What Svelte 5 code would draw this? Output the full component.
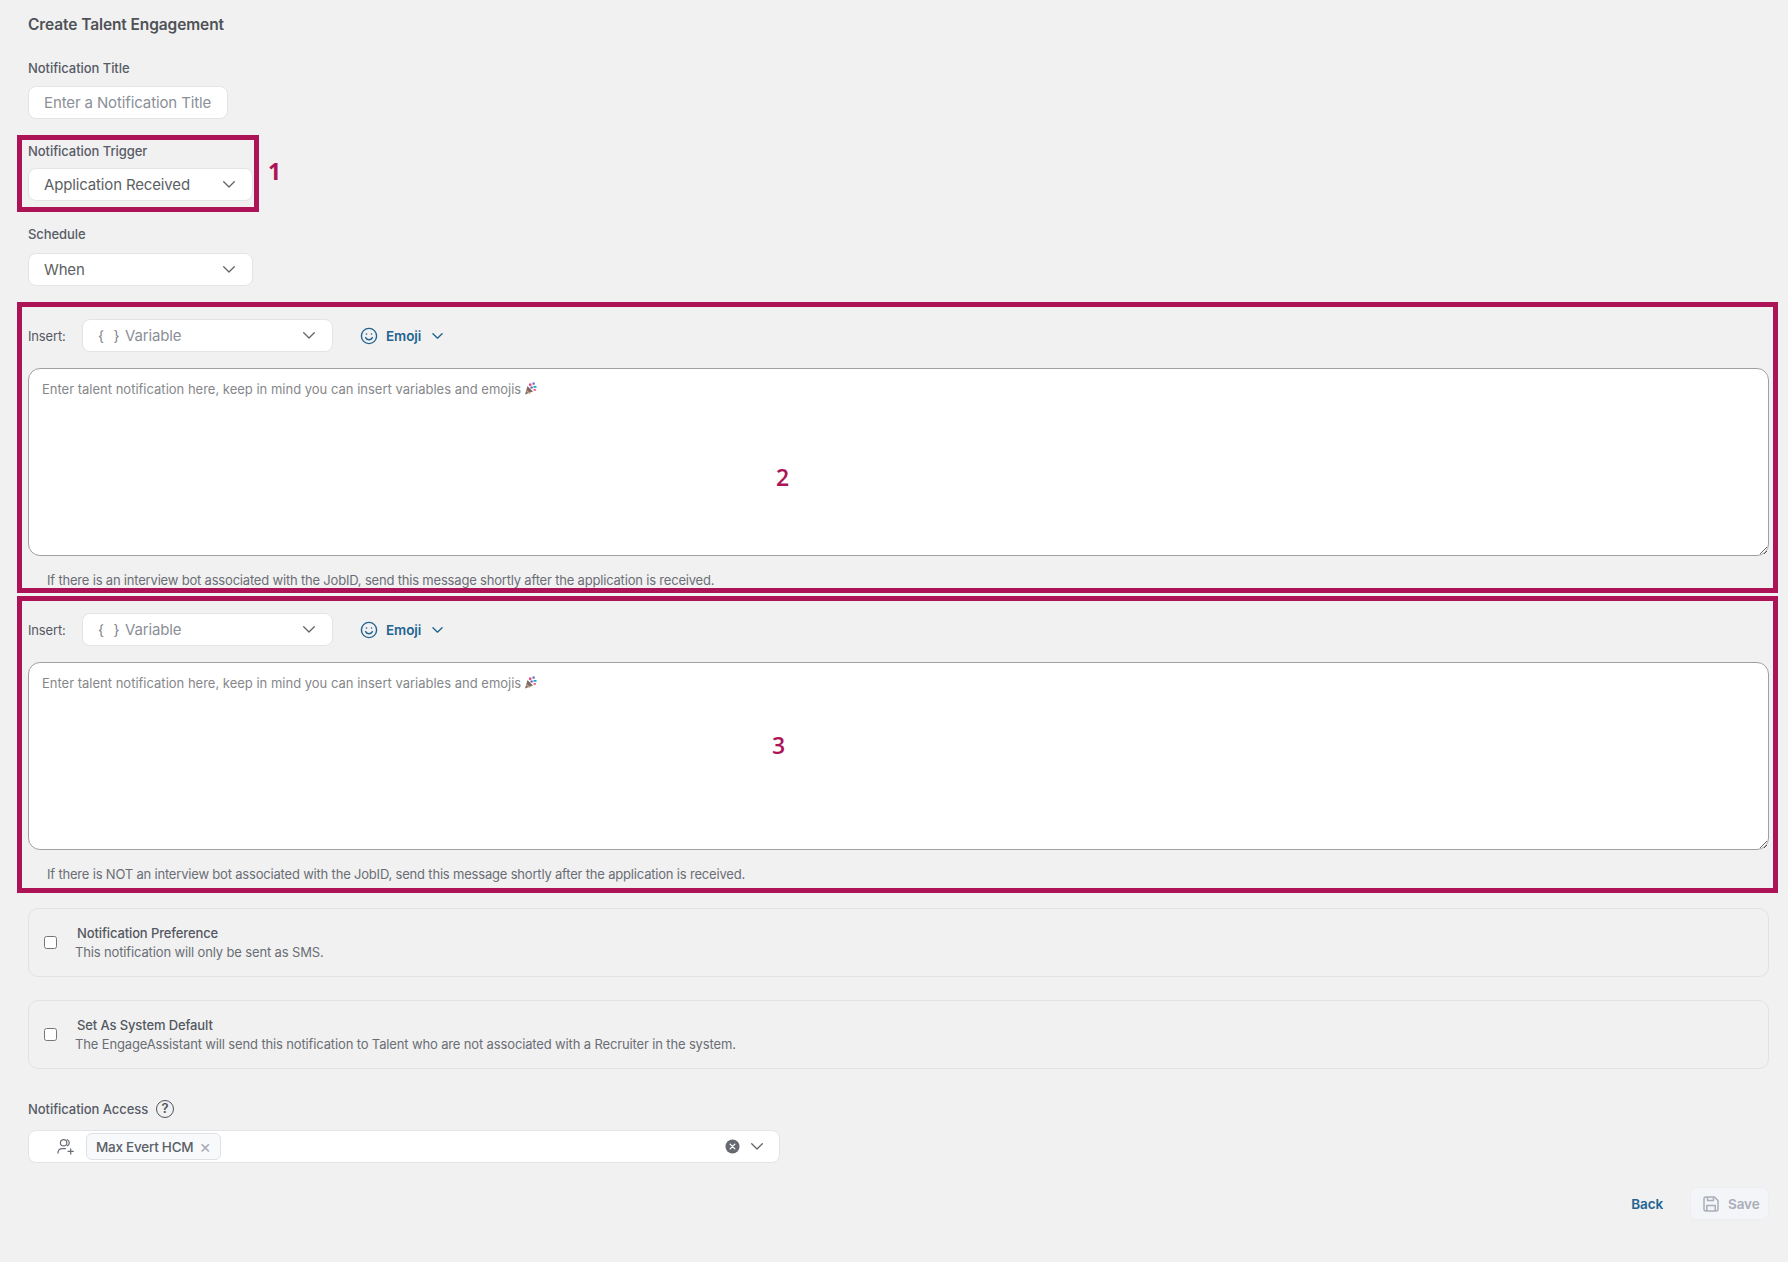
<script>
  let editors = [
    { help: 'If there is an interview bot associated with the JobID, send this message shortly after the application is received.' },
    { help: 'If there is NOT an interview bot associated with the JobID, send this message shortly after the application is received.' }
  ];

  let prefs = [
    { title: 'Notification Preference', text: 'This notification will only be sent as SMS.' },
    { title: 'Set As System Default', text: 'The EngageAssistant will send this notification to Talent who are not associated with a Recruiter in the system.' }
  ];
</script>

{#snippet chevron(cls = 'chev')}
  <svg class={cls} viewBox="0 0 12 7" fill="none" stroke="currentColor" stroke-width="1.3" stroke-linecap="round" stroke-linejoin="round"><path d="M.7.8 6 6l5.3-5.2" /></svg>
{/snippet}

<div class="page">
  <h1>Create Talent Engagement</h1>

  <div class="field title-field">
    <label for="title">Notification Title</label>
    <input id="title" class="title-input" placeholder="Enter a Notification Title" />
  </div>

  <div class="field">
    <div class="label">Notification Trigger</div>
    <button class="select wide">Application Received {@render chevron()}</button>
  </div>

  <div class="field schedule">
    <div class="label">Schedule</div>
    <button class="select wide">When {@render chevron()}</button>
  </div>

  {#each editors as editor}
    <section class="editor">
      <div class="insert-row">
        <span class="insert-label">Insert:</span>
        <button class="select variable">
          <span class="var-left"><span class="braces">&#123; &#125;</span>Variable</span>
          {@render chevron()}
        </button>
        <button class="emoji-btn">
          <svg class="smile" viewBox="0 0 18 18" fill="none" stroke="currentColor" stroke-width="1.4" stroke-linecap="round">
            <circle cx="9" cy="9" r="7.6" />
            <path d="M5.6 10.6c.8 1.5 2 2.2 3.4 2.2s2.6-.7 3.4-2.2" />
            <circle cx="6.5" cy="7" r=".8" fill="currentColor" stroke="none" />
            <circle cx="11.5" cy="7" r=".8" fill="currentColor" stroke="none" />
          </svg>
          Emoji
          {@render chevron('chev-small')}
        </button>
      </div>
      <div class="text-wrap">
        <textarea placeholder="Enter talent notification here, keep in mind you can insert variables and emojis"></textarea>
        <svg class="popper" viewBox="0 0 13 13">
          <path d="M1 12.5 3.5 4 9 9.500Z" fill="#7d6a62" />
          <path d="M2.200 8.500 6 11.500" stroke="#c9a888" stroke-width="1.2" />
          <rect x="5" y="1.500" width="2.4" height="2.4" fill="#e6457a" />
          <rect x="8.500" y=".5" width="2.2" height="2.2" fill="#5c6bc0" />
          <rect x="9.500" y="4" width="3" height="1.8" fill="#26a6c9" />
          <rect x="9.500" y="7" width="2.4" height="1.8" fill="#ec5f8c" />
          <rect x="6.500" y="4.500" width="2.2" height="2" fill="#6a4fb0" />
        </svg>
      </div>
      <p class="help">{editor.help}</p>
    </section>
  {/each}

  <div class="prefs">
    {#each prefs as pref}
      <div class="pref">
        <input type="checkbox" />
        <div class="pref-body">
          <div class="pref-title">{pref.title}</div>
          <div class="pref-text">{pref.text}</div>
        </div>
      </div>
    {/each}
  </div>

  <div class="access-label">
    Notification Access
    <span class="help-icon">?</span>
  </div>
  <div class="access">
    <svg class="people" viewBox="0 0 20 18" fill="none" stroke="currentColor" stroke-width="1.3" stroke-linecap="round">
      <circle cx="8" cy="5" r="3.4" />
      <path d="M12 1.800c1.400.6 2 1.800 2 3.200s-.6 2.500-2 3.200" />
      <path d="M2 16c0-3 1.800-4.800 4.500-4.800H10" />
      <path d="M15.500 11.500v5.500M12.800 14.200h5.400" />
    </svg>
    <span class="chip">Max Evert HCM <span class="chip-x">&times;</span></span>
    <span class="access-right">
      <svg class="clear" viewBox="0 0 16 16">
        <circle cx="8" cy="8" r="7.5" fill="#666a70" />
        <path d="M5.500 5.500l5 5m0-5-5 5" stroke="#fff" stroke-width="1.4" stroke-linecap="round" />
      </svg>
      {@render chevron()}
    </span>
  </div>

  <div class="actions">
    <button class="back">Back</button>
    <button class="save" disabled>
      <svg viewBox="0 0 16 16" fill="none" stroke="currentColor" stroke-width="1.5" stroke-linejoin="round">
        <path d="M1 3a2 2 0 0 1 2-2h8.500L15 4.500V13a2 2 0 0 1-2 2H3a2 2 0 0 1-2-2Z" />
        <path d="M4.500 1v3.500h6V1M3.800 15V9.500h8.400V15" />
      </svg>
      Save
    </button>
  </div>

  <!-- review markers drawn over the form -->
  <div class="mark mark-1"></div>
  <div class="mark mark-2"></div>
  <div class="mark mark-3"></div>
  <span class="num num-1">1</span>
  <span class="num num-2">2</span>
  <span class="num num-3">3</span>
</div>

<style>
  :global(body) {
    margin: 0;
    background: #f1f1f2;
  }

  .page {
    position: relative;
    box-sizing: border-box;
    height: 1262px;
    padding: 16px 19px 0 28px;
    font-family: Inter, 'Liberation Sans', sans-serif;
    color: #55595f;
    overflow: hidden;
  }

  h1 {
    margin: 0 0 25px;
    font-size: 15.5px;
    line-height: 18px;
    font-weight: 600;
    letter-spacing: -0.1px;
    color: #4f5256;
  }

  .field {
    margin-bottom: 24px;
  }

  .title-field {
    margin-bottom: 23px;
  }

  .title-field label {
    margin-bottom: 9px;
  }

  .schedule .label {
    margin-bottom: 10px;
  }

  label,
  .label,
  .access-label {
    display: block;
    margin-bottom: 8px;
    font-size: 13px;
    line-height: 18px;
    font-weight: 500;
    letter-spacing: -0.06px;
    color: #575c66;
  }

  .title-input,
  .select,
  .access {
    box-sizing: border-box;
    height: 33px;
    background: #fff;
    border: 1px solid #e3e4e7;
    border-radius: 8px;
    font-family: inherit;
  }

  .title-input {
    display: block;
    width: 200px;
    padding: 0 15px;
    font-size: 15px;
    letter-spacing: -0.12px;
    outline: none;
  }

  .title-input::placeholder {
    color: #8b9097;
    opacity: 1;
  }

  .select {
    display: flex;
    align-items: center;
    justify-content: space-between;
    padding: 0 17px 0 15px;
    font-size: 15px;
    letter-spacing: -0.15px;
    color: #5c5f64;
  }

  .wide {
    width: 225px;
  }

  .chev {
    width: 12px;
    height: 7px;
    color: #606469;
  }

  .editor {
    padding-top: 9px;
  }

  .editor + .editor {
    padding-top: 24px;
  }

  .insert-row {
    display: flex;
    align-items: center;
    height: 33px;
  }

  .insert-label {
    width: 54px;
    font-size: 13px;
    letter-spacing: -0.15px;
    color: #55595f;
  }

  .variable {
    width: 251px;
    color: #8b9097;
  }

  .var-left {
    display: flex;
    align-items: center;
    font-size: 15px;
  }

  .braces {
    width: 27px;
    text-align: left;
    font-size: 14px;
    word-spacing: 6px;
    color: #7d828a;
  }

  .emoji-btn {
    display: flex;
    align-items: center;
    margin-left: 27px;
    padding: 0;
    border: 0;
    background: none;
    font-family: inherit;
    font-size: 13.5px;
    font-weight: 600;
    letter-spacing: -0.1px;
    color: #22648f;
  }

  .smile {
    width: 18px;
    height: 18px;
    margin-right: 8px;
  }

  .chev-small {
    width: 11px;
    height: 6px;
    margin-left: 11px;
    stroke-width: 1.6;
  }

  .text-wrap {
    position: relative;
    margin-top: 16px;
  }

  textarea {
    display: block;
    box-sizing: border-box;
    width: 100%;
    height: 188px;
    padding: 11px 13px;
    background: #fff;
    border: 1px solid #a0a0a0;
    border-radius: 12px;
    font-family: inherit;
    font-size: 13px;
    line-height: 18px;
    outline: none;
  }

  textarea::placeholder {
    color: #85878a;
    opacity: 1;
  }

  .popper {
    position: absolute;
    left: 496px;
    top: 14px;
    width: 13px;
    height: 13px;
  }

  .help {
    margin: 15px 0 0 19px;
    font-size: 13px;
    line-height: 18px;
    letter-spacing: -0.19px;
    color: #6a6e74;
  }

  .prefs {
    display: flex;
    flex-direction: column;
    gap: 23px;
    margin-top: 25px;
  }

  .pref {
    box-sizing: border-box;
    display: flex;
    align-items: center;
    height: 69px;
    padding-left: 15px;
    border: 1px solid #e1e2e5;
    border-radius: 10px;
  }

  .pref input {
    width: 13px;
    height: 13px;
    margin: 0;
  }

  .pref-body {
    margin-left: 18px;
  }

  .pref-title {
    margin-left: 2px;
    font-size: 13px;
    line-height: 19px;
    font-weight: 500;
    letter-spacing: -0.12px;
    color: #54585f;
  }

  .pref-text {
    font-size: 13px;
    line-height: 19px;
    letter-spacing: -0.14px;
    color: #6a6e74;
  }

  .access-label {
    display: flex;
    align-items: center;
    gap: 8px;
    margin: 31px 0 12px;
  }

  .help-icon {
    box-sizing: border-box;
    width: 18px;
    height: 18px;
    border: 1.7px solid #4f5359;
    border-radius: 50%;
    font-size: 13px;
    line-height: 15px;
    font-weight: 600;
    text-align: center;
    color: #4f5359;
  }

  .access {
    display: flex;
    align-items: center;
    width: 752px;
    padding-left: 27px;
  }

  .people {
    width: 19px;
    height: 17px;
    margin-right: 11px;
    color: #696d74;
  }

  .chip {
    box-sizing: border-box;
    height: 27px;
    padding: 0 9px;
    display: flex;
    align-items: center;
    gap: 6px;
    background: #f8f9fb;
    border: 1px solid #dfe1e6;
    border-radius: 6px;
    font-size: 13.5px;
    font-weight: 500;
    letter-spacing: -0.25px;
    color: #5b5f67;
  }

  .chip-x {
    font-size: 18px;
    font-weight: 400;
    color: #a9adb3;
  }

  .access-right {
    display: flex;
    align-items: center;
    gap: 11px;
    margin-left: auto;
    padding-right: 16px;
  }

  .clear {
    width: 15px;
    height: 15px;
  }

  .actions {
    display: flex;
    justify-content: flex-end;
    align-items: center;
    gap: 27px;
    margin-top: 24px;
  }

  .back,
  .save {
    font-family: inherit;
    font-size: 13.5px;
    font-weight: 600;
    letter-spacing: -0.1px;
  }

  .back {
    padding: 0;
    border: 0;
    background: none;
    color: #22648f;
  }

  .save {
    display: flex;
    align-items: center;
    gap: 9px;
    box-sizing: border-box;
    width: 79px;
    height: 33px;
    padding: 0 0 0 12px;
    background: #f4f5f8;
    border: 1px solid #eceef2;
    border-radius: 7px;
    color: #a9aeb9;
  }

  .save svg {
    width: 16px;
    height: 16px;
  }

  .mark {
    position: absolute;
    box-sizing: border-box;
    border: 5px solid #ad1457;
    pointer-events: none;
  }

  .mark-1 {
    left: 17px;
    top: 135px;
    width: 242px;
    height: 77px;
  }

  .mark-2 {
    left: 17px;
    top: 302px;
    width: 1761px;
    height: 291px;
  }

  .mark-3 {
    left: 17px;
    top: 596px;
    width: 1761px;
    height: 297px;
  }

  .num {
    position: absolute;
    font-family: 'Open Sans', sans-serif;
    font-size: 23px;
    line-height: 30px;
    font-weight: 600;
    color: #ad1457;
  }

  .num-1 {
    left: 268px;
    top: 156px;
    font-weight: 700;
  }

  .num-2 {
    left: 776px;
    top: 462px;
  }

  .num-3 {
    left: 772px;
    top: 730px;
  }
</style>
